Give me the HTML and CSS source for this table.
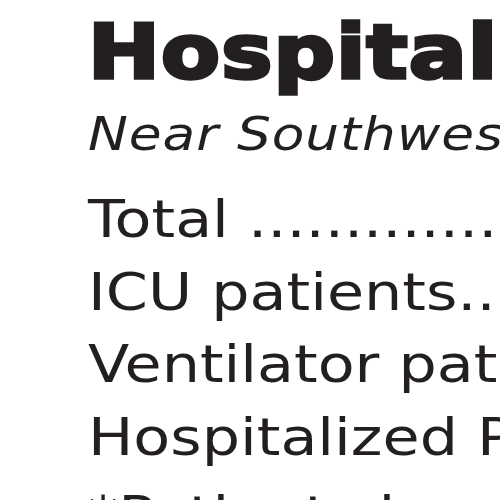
FILE: index.html
```html
<!DOCTYPE html>
<html>
<head>
<meta charset="utf-8">
<link rel="stylesheet" href="styles.css">
</head>
<body>
<div class="box">
  <div class="inner">
    <h1 class="title">Hospitalizations</h1>
    <p class="sub">Near Southwest Florida</p>
    <ul class="rows">
      <li class="row">Total ..........................</li>
      <li class="row">ICU patients....................</li>
      <li class="row">Ventilator patients.............</li>
      <li class="row">Hospitalized Patients...........</li>
      <li class="row note">*Patients hospitalized in</li>
    </ul>
  </div>
</div>
</body>
</html>
```
FILE: styles.css
```css
html, body {
  margin: 0;
  padding: 0;
  background: #fff;
  width: 500px;
  height: 500px;
  overflow: hidden;
}
.box {
  padding-left: 88px;
  color: #231f20;
  font-family: "DejaVu Sans", "Open Sans", sans-serif;
  white-space: nowrap;
}
.inner {
  transform: scaleX(1.16);
  transform-origin: 0 0;
}
.title {
  margin: 0;
  font-size: 74px;
  font-weight: 700;
  line-height: 1;
  padding-top: 15px;
  -webkit-text-stroke: 3.5px #231f20;
  letter-spacing: 1px;
}
.sub {
  margin: 0;
  font-size: 46px;
  font-style: italic;
  line-height: 1;
  padding-top: 22px;
  letter-spacing: 0.8px;
}
.rows {
  list-style: none;
  margin: 0;
  padding: 26px 0 0 0;
}
.row {
  font-size: 52px;
  line-height: 72.5px;
}
.note {
  padding-top: 6px;
}
```
